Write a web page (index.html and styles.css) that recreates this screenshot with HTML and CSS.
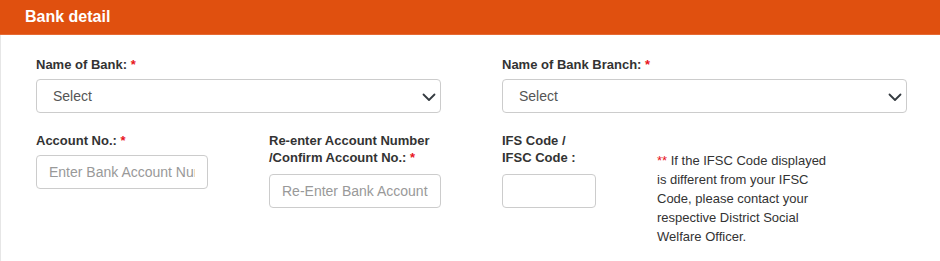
FILE: index.html
```html
<!DOCTYPE html>
<html lang="en">
<head>
<meta charset="utf-8">
<title>Bank detail</title>
<link rel="stylesheet" href="styles.css">
</head>
<body>
<div class="panel">
  <div class="panel-heading">Bank detail</div>
  <div class="panel-body">
    <div class="row-top">
      <div class="field">
        <label class="label">Name of Bank: <span class="req">*</span></label>
        <div class="select">
          <span class="select-text">Select</span>
          <svg class="chevron" width="16" height="16" viewBox="0 0 16 16"><path d="M2.5 5.5l5.5 5.5 5.5-5.5" fill="none" stroke="#343a40" stroke-width="1.8" stroke-linecap="round" stroke-linejoin="round"/></svg>
        </div>
      </div>
      <div class="field">
        <label class="label">Name of Bank Branch: <span class="req">*</span></label>
        <div class="select">
          <span class="select-text">Select</span>
          <svg class="chevron" width="16" height="16" viewBox="0 0 16 16"><path d="M2.5 5.5l5.5 5.5 5.5-5.5" fill="none" stroke="#343a40" stroke-width="1.8" stroke-linecap="round" stroke-linejoin="round"/></svg>
        </div>
      </div>
    </div>
    <div class="row-bottom">
      <div class="field">
        <label class="label">Account No.: <span class="req">*</span></label>
        <input class="input" type="text" placeholder="Enter Bank Account Number">
      </div>
      <div class="field">
        <label class="label label-2l">Re-enter Account Number<br>/Confirm Account No.: <span class="req">*</span></label>
        <input class="input" type="text" placeholder="Re-Enter Bank Account Number">
      </div>
      <div class="field">
        <label class="label label-2l">IFS Code /<br>IFSC Code :</label>
        <input class="input" type="text">
      </div>
      <p class="note"><span class="req">**</span> If the IFSC Code displayed is different from your IFSC Code, please contact your respective District Social Welfare Officer.</p>
    </div>
  </div>
</div>
</body>
</html>
```
FILE: styles.css
```css
html, body {
  margin: 0;
  padding: 0;
  background: #ffffff;
}
body {
  font-family: "Liberation Sans", Arial, sans-serif;
  color: #333333;
  overflow: hidden;
}
.panel {
  border: 1px solid #e6e6e6;
  border-right: none;
  border-top: none;
  border-radius: 0 0 0 4px;
}
.panel-heading {
  height: 35px;
  box-sizing: border-box;
  background: #e0500f;
  border-bottom: 1px solid #e66a33;
  color: #ffffff;
  font-weight: bold;
  font-size: 16px;
  line-height: 18px;
  padding: 8px 0 0 25px;
  margin-left: -1px;
}
.panel-body {
  padding: 21px 0 17px 35px;
}
.row-top {
  display: grid;
  grid-template-columns: 405px 405px;
  column-gap: 61px;
}
.row-bottom {
  display: grid;
  grid-template-columns: 172px 172px 94px 180px;
  column-gap: 61px;
  margin-top: 19px;
  align-items: start;
}
.field {
  display: flex;
  flex-direction: column;
}
.label {
  font-size: 13px;
  font-weight: bold;
  line-height: 17px;
  margin-bottom: 6px;
  color: #333333;
}
.label-2l {
  margin-bottom: 8px;
}
.req {
  color: #e8141b;
}
.select {
  height: 34px;
  box-sizing: border-box;
  border: 1px solid #cccccc;
  border-radius: 4px;
  display: flex;
  align-items: center;
  justify-content: space-between;
  padding: 0 3px 0 16px;
  background: #ffffff;
}
.select-text {
  font-size: 14px;
  color: #555555;
}
.chevron {
  display: block;
  margin-top: 1px;
}
.input {
  height: 34px;
  width: 100%;
  box-sizing: border-box;
  border: 1px solid #cccccc;
  border-radius: 4px;
  padding: 6px 12px;
  font-family: "Liberation Sans", Arial, sans-serif;
  font-size: 14px;
  color: #555555;
  background: #ffffff;
  margin: 0;
}
.input::placeholder {
  color: #999999;
  opacity: 1;
}
.note {
  margin: 19px 0 0 0;
  font-size: 13px;
  line-height: 19px;
  color: #333333;
  width: 180px;
}
```
